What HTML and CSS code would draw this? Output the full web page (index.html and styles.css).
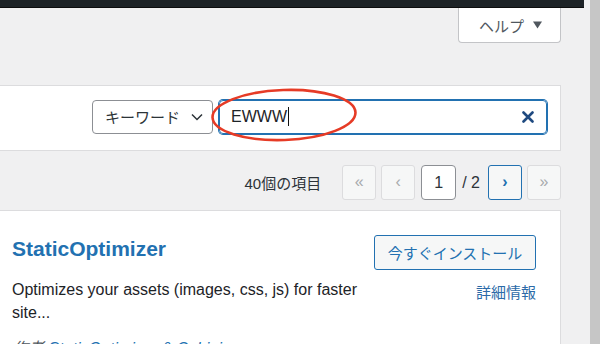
FILE: index.html
```html
<!DOCTYPE html>
<html lang="ja">
<head>
  <meta charset="UTF-8">
  <meta name="viewport" content="width=device-width, initial-scale=1.0">
  <title>プラグインを追加</title>
  <link rel="stylesheet" href="styles.css">
</head>
<body>
  <div class="main">
    <div class="adminbar"></div>

    <div class="screen-meta">
      <button class="help-btn">ヘルプ<svg class="tri" width="9" height="8" viewBox="0 0 9 8"><polygon points="0,0.5 9,0.5 4.5,7.5" fill="#50575e"/></svg></button>
    </div>

    <div class="panel filter">
      <div class="select">
        キーワード
        <svg class="chev" width="12" height="8" viewBox="0 0 12 8"><polyline points="1,1.5 6,6.5 11,1.5" fill="none" stroke="#2c3338" stroke-width="1.5"/></svg>
      </div>
      <div class="search-input">
        <span class="typed">EWWW</span><span class="caret"></span>
        <svg class="clear" width="12" height="12" viewBox="0 0 12 12"><path d="M1.5 1.5 L10.5 10.5 M10.5 1.5 L1.5 10.5" stroke="#1f4a80" stroke-width="2.6" stroke-linecap="round"/></svg>
      </div>
    </div>

    <div class="tablenav">
      <span class="displaying-num">40個の項目</span>
      <span class="page-btn disabled">«</span>
      <span class="page-btn disabled">‹</span>
      <span class="current-page">1</span>
      <span class="total-pages">/ 2</span>
      <span class="page-btn next">›</span>
      <span class="page-btn disabled">»</span>
    </div>

    <div class="panel plugin-card">
      <div class="card-left">
        <h3 class="plugin-name">StaticOptimizer</h3>
        <p class="desc">Optimizes your assets (images, css, js) for faster site...</p>
        <p class="authors"><cite>作者 <a href="#">StaticOptimizer &amp; Cobinin...</a></cite></p>
      </div>
      <div class="card-right">
        <button class="install-btn">今すぐインストール</button>
        <a href="#" class="more-details">詳細情報</a>
      </div>
    </div>
  </div>
  <div class="scrollbar"></div>

  <!-- annotation drawn over the search box -->
  <svg class="mark" width="154" height="62" viewBox="0 0 154 62">
    <ellipse cx="76" cy="30" rx="71.5" ry="25" transform="rotate(-2 76 30)" fill="none" stroke="#e63b26" stroke-width="2.6"/>
  </svg>
</body>
</html>
```

FILE: styles.css
```css
body {
  margin: 0;
  height: 344px;
  overflow: hidden;
  display: flex;
  position: relative;
  background: #f0f0f1;
  font-family: "Liberation Sans", "Noto Sans CJK JP", sans-serif;
  color: #1d2327;
}
.main {
  flex: 1;
  min-width: 0;
}
.adminbar {
  height: 8px;
  margin-right: 6px;
  background: #1d2327;
  box-shadow: inset 0 -1px #0c0d0e;
}
.scrollbar {
  width: 10px;
  background: #c6c6c6;
}

.screen-meta {
  display: flex;
  justify-content: flex-end;
  margin-right: 29px;
}
.help-btn {
  display: flex;
  align-items: center;
  justify-content: center;
  width: 103px;
  height: 35px;
  background: #fff;
  border: 1px solid #c3c4c7;
  border-top: none;
  border-radius: 0 0 4px 4px;
  color: #50575e;
  font-family: inherit;
  font-size: 15px;
  padding: 0 0 0 2px;
}
.help-btn .tri {
  margin-left: 9px;
}

.panel {
  background: #fff;
  border: 1px solid #dcdcde;
  border-left: none;
  margin-right: 29px;
}
.filter {
  margin-top: 42px;
  display: flex;
  justify-content: flex-end;
  align-items: center;
  height: 61px;
  padding: 0 13px 3px 0;
}
.select {
  display: flex;
  align-items: center;
  justify-content: space-between;
  box-sizing: border-box;
  width: 121px;
  height: 34px;
  padding: 0 9px 0 12px;
  border: 1px solid #8c8f94;
  border-radius: 4px;
  font-size: 15px;
  color: #2c3338;
}
.chev {
  margin-top: 1px;
}
.search-input {
  display: flex;
  align-items: center;
  box-sizing: border-box;
  width: 328px;
  height: 34px;
  margin-left: 6px;
  padding: 0 12px 0 11px;
  border: 1px solid #2271b1;
  box-shadow: 0 0 0 1px #2271b1;
  border-radius: 4px;
  font-size: 16px;
}
.caret {
  width: 1px;
  height: 19px;
  margin-left: 1px;
  background: #111;
}
.clear {
  margin-left: auto;
}

.tablenav {
  display: flex;
  justify-content: flex-end;
  align-items: center;
  margin: 14px 29px 0 0;
  height: 35px;
  font-size: 16px;
  color: #2c3338;
}
.displaying-num {
  font-size: 15px;
  margin-right: 16px;
}
.page-btn {
  box-sizing: border-box;
  width: 34px;
  height: 35px;
  display: flex;
  align-items: center;
  justify-content: center;
  border: 1px solid #dcdcde;
  border-radius: 3px;
  background: #f6f7f7;
  margin-left: 5px;
  padding-bottom: 2px;
}
.page-btn:first-of-type {
  margin-left: 0;
}
.page-btn.disabled {
  color: #a7aaad;
}
.page-btn.next {
  border-color: #2271b1;
  color: #2271b1;
  font-weight: bold;
  margin-left: 8px;
}
.current-page {
  box-sizing: border-box;
  width: 35px;
  height: 35px;
  display: flex;
  align-items: center;
  justify-content: center;
  border: 1px solid #8c8f94;
  border-radius: 4px;
  background: #fff;
  margin-left: 6px;
}
.total-pages {
  margin-left: 6px;
}

.plugin-card {
  margin-top: 10px;
  display: flex;
  justify-content: space-between;
  padding: 24px 24px 0 12px;
  height: 200px;
}
.card-left {
  width: 360px;
}
.plugin-name {
  margin: 0;
  font-size: 21px;
  line-height: 27px;
  color: #2271b1;
}
.desc {
  margin: 16px 0 0;
  font-size: 16px;
  line-height: 23px;
  color: #1d2327;
}
.authors {
  margin: 13px 0 0;
  font-size: 16px;
  line-height: 23px;
  color: #50575e;
}
.authors a {
  color: #2271b1;
  text-decoration: none;
}
.card-right {
  display: flex;
  flex-direction: column;
  align-items: flex-end;
}
.install-btn {
  width: 162px;
  height: 35px;
  background: #f6f7f7;
  border: 1px solid #2271b1;
  border-radius: 3px;
  color: #2271b1;
  font-family: inherit;
  font-size: 15px;
  padding: 0;
}
.more-details {
  margin-top: 13px;
  font-size: 15px;
  line-height: 20px;
  color: #2c6aa8;
  text-decoration: none;
}

.mark {
  position: absolute;
  left: 208px;
  top: 85px;
}
```
